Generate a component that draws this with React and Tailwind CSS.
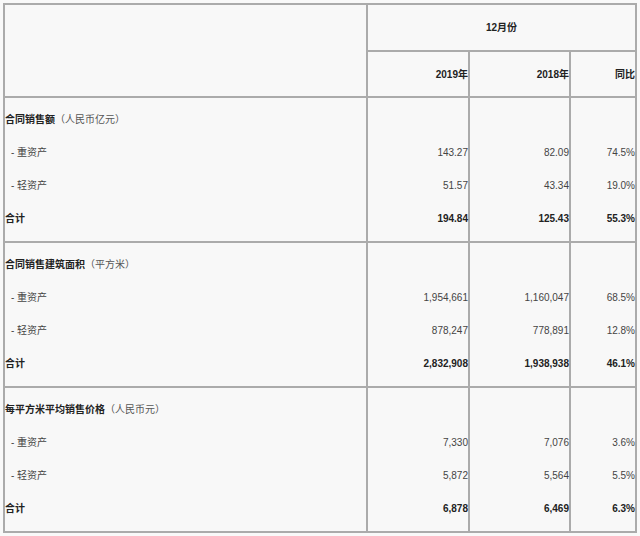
import React from "react";

const sections = [
  {
    title: "合同销售额",
    unit: "（人民币亿元）",
    rows: [
      ["143.27", "82.09", "74.5%"],
      ["51.57", "43.34", "19.0%"],
      ["194.84", "125.43", "55.3%"],
    ],
  },
  {
    title: "合同销售建筑面积",
    unit: "（平方米）",
    rows: [
      ["1,954,661", "1,160,047", "68.5%"],
      ["878,247", "778,891", "12.8%"],
      ["2,832,908", "1,938,938", "46.1%"],
    ],
  },
  {
    title: "每平方米平均销售价格",
    unit: "（人民币元）",
    rows: [
      ["7,330", "7,076", "3.6%"],
      ["5,872", "5,564", "5.5%"],
      ["6,878", "6,469", "6.3%"],
    ],
  },
];

const labels = ["- 重资产", "- 轻资产", "合计"];

export default function App() {
  return (
    <div
      className="w-[640px] h-[536px] bg-[#f9f9f9] pt-[3px] pl-[3px] text-[10px] text-[#444]"
      style={{ fontFamily: '"Liberation Sans", Arial, "Noto Sans CJK SC", sans-serif' }}
    >
      <div className="w-[634px] border-2 border-[#ababab] bg-[#ababab] grid grid-cols-[361px_100px_99px_64px] grid-rows-[45px_44px_143px_143px_143px] gap-[2px]">
        <div className="row-span-2 bg-[#f8f8f8]" />
        <div className="col-span-3 bg-[#f8f8f8] flex items-center justify-center font-bold text-[#222]">
          12月份
        </div>
        {["2019年", "2018年", "同比"].map((h) => (
          <div key={h} className="bg-[#f8f8f8] flex items-center justify-end font-bold text-[#222] overflow-hidden whitespace-nowrap">
            {h}
          </div>
        ))}
        {sections.map((s) => (
          <React.Fragment key={s.title}>
            <div className="bg-[#f8f8f8] pt-[5px] leading-[33px]">
              <div>
                <span className="font-bold text-[#222]">{s.title}</span>
                <span className="text-[#555]">{s.unit}</span>
              </div>
              {labels.map((l, i) => (
                <div
                  key={l}
                  className={i === 2 ? "font-bold text-[#222]" : "pl-[6px] text-[#444]"}
                >
                  {l}
                </div>
              ))}
            </div>
            {[0, 1, 2].map((c) => (
              <div key={c} className="bg-[#f8f8f8] pt-[5px] leading-[33px] text-right whitespace-nowrap">
                <div>&nbsp;</div>
                {s.rows.map((r, i) => (
                  <div key={i} className={i === 2 ? "font-bold text-[#222]" : "text-[#444]"}>
                    {r[c]}
                  </div>
                ))}
              </div>
            ))}
          </React.Fragment>
        ))}
      </div>
    </div>
  );
}
